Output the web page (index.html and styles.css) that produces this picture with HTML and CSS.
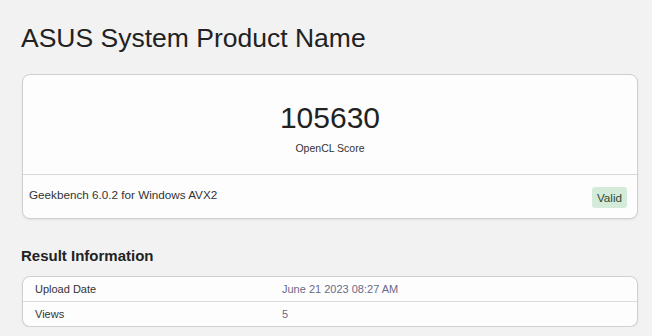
FILE: index.html
```html
<!DOCTYPE html>
<html lang="en">
<head>
  <meta charset="UTF-8">
  <meta name="viewport" content="width=device-width, initial-scale=1.0">
  <title>ASUS System Product Name - Geekbench</title>
  <link rel="stylesheet" href="styles.css">
</head>
<body>
  <div class="page">
    <h1 class="device-name">ASUS System Product Name</h1>

    <div class="card score-card">
      <div class="score-body">
        <div class="score">105630</div>
        <div class="score-label">OpenCL Score</div>
      </div>
      <div class="score-footer">
        <span>Geekbench 6.0.2 for Windows AVX2</span>
        <span class="badge valid">Valid</span>
      </div>
    </div>

    <h2 class="section-title">Result Information</h2>
    <div class="card">
      <table class="info-table">
        <tr><td class="name">Upload Date</td><td class="value">June 21 2023 08:27 AM</td></tr>
        <tr><td class="name">Views</td><td class="value">5</td></tr>
      </table>
    </div>
  </div>
</body>
</html>
```

FILE: styles.css
```css
body { margin: 0; background: #f2f2f2; font-family: "Liberation Sans", Arial, sans-serif; color: #222; }
.page { padding: 20px 14px 0 22px; }
.device-name { margin: 0 0 18px -1px; font-size: 26.5px; font-weight: normal; line-height: 36px; color: #222; }
.card { background: #fdfdfd; border: 1px solid #d0d0d0; border-radius: 8px; box-shadow: 0 1px 2px rgba(0,0,0,0.08); overflow: hidden; }
.score-body { height: 98px; text-align: center; padding-top: 1px; }
.score { font-size: 30px; line-height: 34px; margin-top: 25px; color: #222; }
.score-label { font-size: 10.5px; margin-top: 7px; color: #333; }
.score-footer { display: flex; justify-content: space-between; align-items: center; border-top: 1px solid #d8d8d8; height: 43px; padding: 0 10px 0 6px; font-size: 11.7px; color: #333; }
.score-footer span:first-child { margin-top: -5px; }
.badge { padding: 4px 5px; border-radius: 3px; font-size: 11.7px; margin-top: 2px; }
.valid { background: #d4ebd9; color: #2d4a36; }
.section-title { margin: 28px 0 11px -1px; font-size: 15px; font-weight: bold; line-height: 18px; color: #222; }
.info-table { width: 100%; border-collapse: collapse; font-size: 11px; }
.info-table td { height: 24px; padding: 0 12px; }
.info-table tr + tr td { border-top: 1px solid #dcdcdc; }
.info-table .name { width: 235px; color: #333; }
.info-table .value { padding-left: 0; color: #6a6a88; }
```
